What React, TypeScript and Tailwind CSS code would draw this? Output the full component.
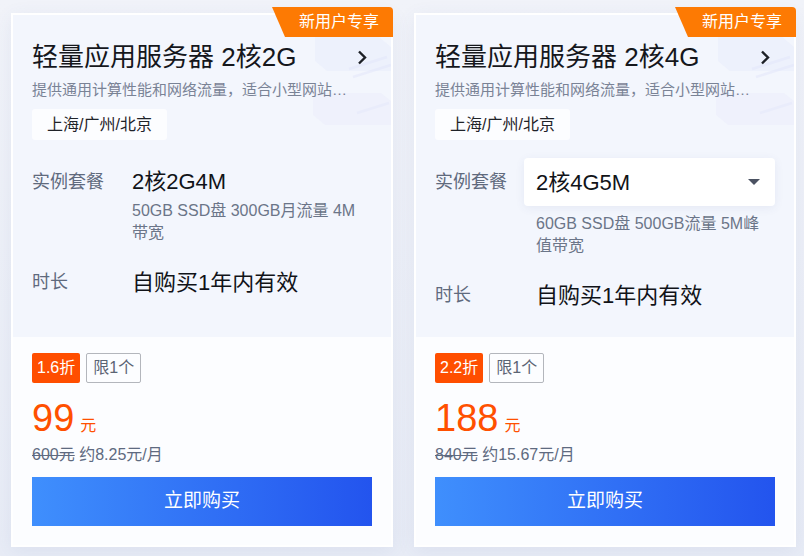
import React from 'react';

type Plan = {
  title: string;
  spec: string;
  detail: string;
  discount: string;
  price: string;
  original: string;
  monthly: string;
  select?: boolean;
};

const PLANS: Plan[] = [
  {
    title: '轻量应用服务器 2核2G',
    spec: '2核2G4M',
    detail: '50GB SSD盘 300GB月流量 4M 带宽',
    discount: '1.6折',
    price: '99',
    original: '600元',
    monthly: '约8.25元/月',
  },
  {
    title: '轻量应用服务器 2核4G',
    spec: '2核4G5M',
    detail: '60GB SSD盘 500GB流量 5M峰值带宽',
    discount: '2.2折',
    price: '188',
    original: '840元',
    monthly: '约15.67元/月',
    select: true,
  },
];

const FONT = 'font-["Liberation_Sans","Noto_Sans_CJK_SC",sans-serif]';

// faint server illustration behind the card header
function Decoration() {
  return (
    <svg className="absolute right-0 top-0 pointer-events-none" width="100" height="130" viewBox="0 0 100 130">
      <path d="M24 22 L88 22 L100 32 L100 56 L36 56 L24 46 Z" fill="#e8ebfb" opacity="0.5" />
      <path d="M58 54 L96 42 M62 62 L100 50" stroke="#e0e4fa" strokeWidth="2.5" opacity="0.45" />
      <path d="M22 78 L90 78 L100 86 L100 110 L34 110 L22 100 Z" fill="#e9ecfb" opacity="0.4" />
      <path d="M66 98 L98 88" stroke="#e2e6fa" strokeWidth="2.5" opacity="0.4" />
    </svg>
  );
}

function Card({ plan }: { plan: Plan }) {
  return (
    <div className="relative w-[382px] h-[534px] border-2 border-white bg-[#fcfdff] shadow-[0_4px_18px_rgba(70,90,150,0.08)] flex flex-col">
      <div className="relative h-[322px] bg-[#f3f6fd] px-[19px] pt-[24px] overflow-hidden">
        <Decoration />
        <div className="relative flex items-center justify-between pr-[5px]">
          <span className="text-[26px] leading-[36px] text-[#15171c]">{plan.title}</span>
          <svg width="10" height="15" viewBox="0 0 10 15">
            <path d="M2 1.5 L8 7.5 L2 13.5" fill="none" stroke="#1d2026" strokeWidth="2.4" />
          </svg>
        </div>
        <div className="relative mt-[4px] whitespace-nowrap text-[15px] leading-[22px] text-[#7a8396]">
          提供通用计算性能和网络流量，适合小型网站…
        </div>
        <div className="relative mt-2 inline-flex h-[31px] items-center rounded-[3px] bg-white/75 px-[15px] text-[16px] text-[#1f2329]">
          上海/广州/北京
        </div>

        {plan.select ? (
          <div className="relative mt-[18px] flex">
            <div className="w-[89px] h-[48px] flex items-center text-[18px] text-[#5f6a7d]">实例套餐</div>
            <div className="flex flex-col">
              <div className="w-[251px] h-[48px] rounded-[4px] bg-white shadow-[0_2px_10px_rgba(60,80,140,0.08)] flex items-center justify-between pl-[12px] pr-[15px]">
                <span className="text-[22px] text-[#111318]">{plan.spec}</span>
                <svg width="12" height="6" viewBox="0 0 12 6">
                  <path d="M0 0 L12 0 L6 6 Z" fill="#4b5262" />
                </svg>
              </div>
              <div className="mt-[7px] pl-[12px] w-[240px] text-[16px] leading-[22px] text-[#6b7588]">{plan.detail}</div>
            </div>
          </div>
        ) : (
          <div className="relative mt-[30px] flex">
            <div className="w-[100px] leading-[24px] text-[18px] text-[#5f6a7d]">实例套餐</div>
            <div className="flex flex-col">
              <div className="text-[22px] leading-[24px] text-[#111318]">{plan.spec}</div>
              <div className="mt-[6px] w-[228px] text-[16px] leading-[22px] text-[#6b7588]">{plan.detail}</div>
            </div>
          </div>
        )}

        <div className="relative mt-[23px] flex items-center h-[30px]">
          <div className={`${plan.select ? 'w-[101px]' : 'w-[100px]'} text-[18px] text-[#5f6a7d]`}>时长</div>
          <div className="text-[22px] text-[#111318]">自购买1年内有效</div>
        </div>
      </div>

      <div className="flex-1 px-[19px] pt-[16px]">
        <div className="flex gap-[6px]">
          <span className="h-[30px] flex items-center rounded-[2px] bg-[#ff4e00] px-[5px] text-[16px] text-white">{plan.discount}</span>
          <span className="h-[30px] flex items-center rounded-[2px] border border-[#b3b6bc] px-[6px] text-[16px] text-[#5b6474]">限1个</span>
        </div>
        <div className="mt-[13px] flex items-baseline gap-[6px] text-[#ff5000]">
          <span className="text-[38px] leading-[44px]">{plan.price}</span>
          <span className="text-[16px]">元</span>
        </div>
        <div className="mt-[4px] text-[16px] leading-[22px] text-[#5e6a80]">
          <span className="line-through">{plan.original}</span> {plan.monthly}
        </div>
        <button className="mt-[11px] w-[340px] h-[49px] bg-[linear-gradient(90deg,#3f8ffd,#2354ee)] text-[19px] text-white">
          立即购买
        </button>
      </div>

      <div className="absolute right-[-2px] top-[-8px] h-[30px] w-[121px] rounded-tr-[4px] bg-[#fd7a03] [clip-path:polygon(0_0,100%_0,100%_100%,13px_100%)] flex items-center justify-end pr-[14px] text-[16px] text-white">
        新用户专享
      </div>
    </div>
  );
}

export default function App() {
  return (
    <div className={`${FONT} w-[804px] h-[556px] overflow-hidden bg-[linear-gradient(180deg,#f1f3f9,#e8ecf6)] flex gap-[21px] pl-[11px] pt-[13px]`}>
      {PLANS.map((p) => (
        <Card key={p.title} plan={p} />
      ))}
    </div>
  );
}
